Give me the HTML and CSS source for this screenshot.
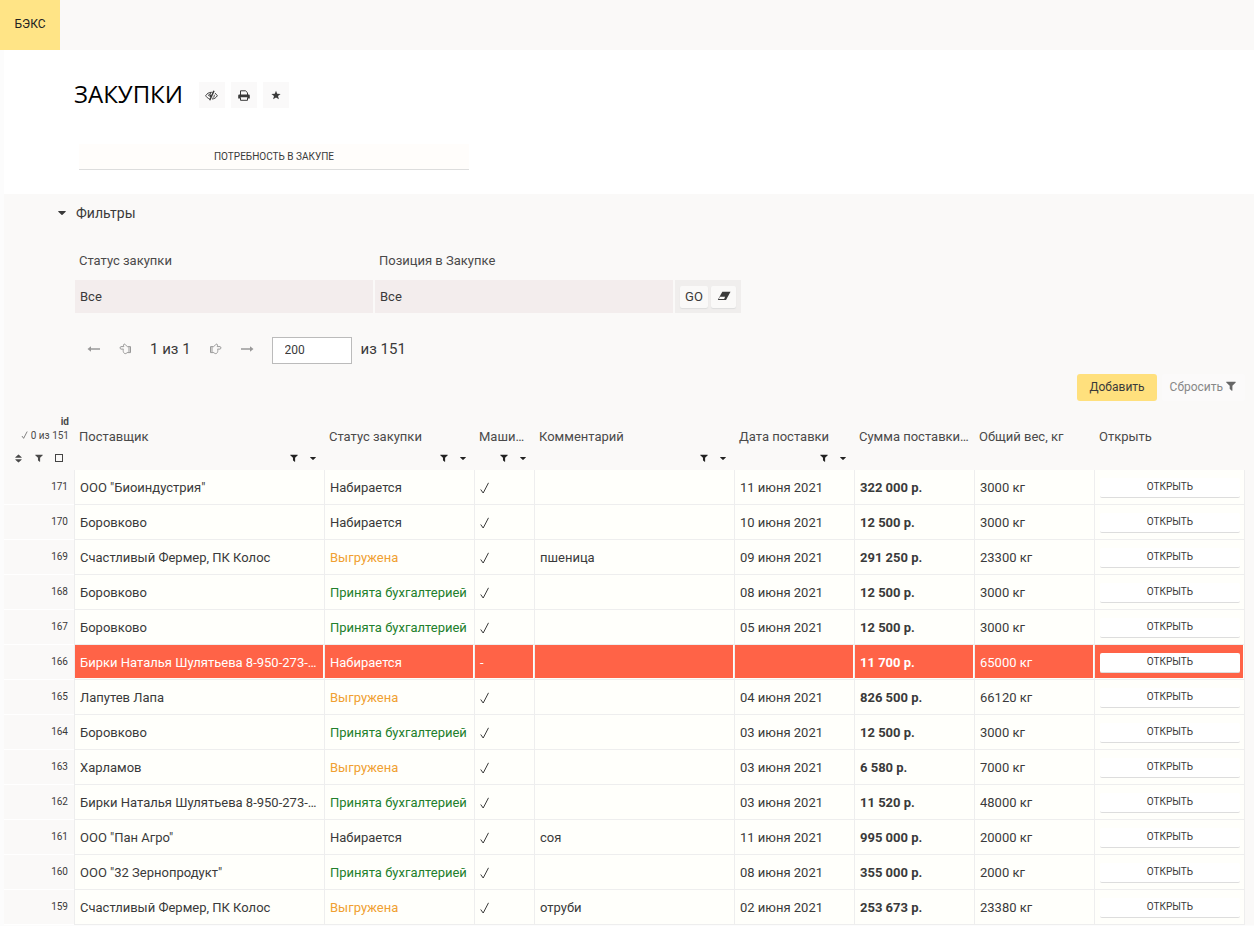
FILE: index.html
```html
<!DOCTYPE html>
<html lang="ru">
  <head>
    <meta charset="UTF-8" />
    <meta name="viewport" content="width=device-width, initial-scale=1.0" />
    <title>Закупки</title>
    <link rel="stylesheet" href="styles.css">
  </head>
  <body>
    <svg class="sprite" aria-hidden="true">
      <symbol id="filter" viewBox="0 0 10 10">
        <path d="M.6.8h8.8c.4 0 .5.4.3.7L6.4 4.8v4.6c0 .4-.4.5-.7.3L3.9 8.1a.6.6 0 0 1-.2-.4V4.8L.3 1.5C0 1.200.200.8.6.8z" />
      </symbol>
      <symbol id="caret" viewBox="0 0 8 4">
        <path d="M.7 0h6.600c.5 0 .7.5.4.8L4.500 3.700a.7.7 0 0 1-1 0L.3.8C0 .5.200 0 .7 0z" />
      </symbol>
      <symbol id="sort" viewBox="0 0 8 10">
        <path d="M.8 4.200h6.400c.5 0 .6-.4.4-.7L4.400.6a.6.6 0 0 0-.8 0L.4 3.500c-.3.3-.1.7.4.7zM.8 5.800h6.400c.5 0 .6.4.4.7L4.400 9.400a.6.6 0 0 1-.8 0L.4 6.500c-.3-.3-.1-.7.4-.7z" />
      </symbol>
      <symbol id="hand" viewBox="0 0 12 12">
        <path d="M1.500 3.600h2.800C3.800 2.600 3.800 1.300 4.800 1.100c1.100-.2 1.500 1.600 3 2.500h3.200v6H7.600C6.600 11 4.800 10.900 4.300 9.700c-.6-.6-.6-1.300-.3-1.700-.5-.6-.4-1.300 0-1.900H1.500C.3 6.100.3 3.600 1.500 3.600zM9.500 4v5" fill="none" stroke="currentColor" />
      </symbol>
      <symbol id="arrow" viewBox="0 0 14 8">
        <path d="M1 3.200h9V1.200L13.500 4 10 6.800V4.800H1z" />
      </symbol>
    </svg>

    <header class="topbar">
      <a class="brand" href="#">БЭКС</a>
    </header>

    <main>
      <section class="head">
        <div class="title-row">
          <h1>ЗАКУПКИ</h1>
          <div class="tools">
            <button type="button" class="tool" aria-label="Скрыть">
              <svg class="line" width="13" height="11" viewBox="0 0 13 11">
                <path d="M4.500 8.800C2.800 8.300 1.500 7.200.7 5.700 2 3.500 4 2.300 6.500 2.300h1M9.900 3.200c1 .6 1.800 1.400 2.400 2.500C11.300 7.600 9.300 8.900 7 9" />
                <path d="M3.700 6C3.700 4.300 4.800 3.600 6 3.500M9.300 4.800c.2 1.300-.4 2.400-1.600 3" />
                <path d="M9 .7 4.700 10.300M5.300 4.500v2.500" stroke-width="1.500" />
              </svg>
            </button>
            <button type="button" class="tool" aria-label="Печать">
              <svg width="12" height="11" viewBox="0 0 12 11">
                <path d="M2.500 5V.8h5L9.500 2.700V5M2.500 7.500v2.800h7V7.500" fill="none" stroke="currentColor" />
                <path d="M1.500 4.500h9c.8 0 1.300.5 1.300 1.300v2.800H9.500V7.200h-7v1.400H.2V5.800c0-.8.5-1.300 1.300-1.300z" />
              </svg>
            </button>
            <button type="button" class="tool" aria-label="В избранное">
              <svg width="10" height="10" viewBox="0 0 10 10">
                <path d="m5 .7 1.200 3.100 3.400.2L7 6.100l.9 3.200L5 7.500 2.100 9.300 3 6.100.4 4l3.400-.2z" />
              </svg>
            </button>
          </div>
        </div>
        <button type="button" class="need">ПОТРЕБНОСТЬ В ЗАКУПЕ</button>
      </section>

      <section class="content">
        <button type="button" class="toggle">
          <svg width="8" height="4"><use href="#caret" /></svg>Фильтры
        </button>

        <form class="filters">
          <div class="field">
            <label for="status">Статус закупки</label>
            <select id="status"><option>Все</option></select>
          </div>
          <div class="field">
            <label for="position">Позиция в Закупке</label>
            <select id="position"><option>Все</option></select>
          </div>
          <div class="go">
            <button type="button" class="submit">GO</button>
            <button type="button" class="erase" aria-label="Очистить">
              <svg width="14" height="10" viewBox="0 0 14 10">
                <path d="M5.300.8h8.200L9 9H.8z" />
                <path d="M2.900 5.800h5.200L7.100 7.900H1.900z" fill="#faf9f8" />
              </svg>
            </button>
          </div>
        </form>

        <div class="pager">
          <button type="button" class="nav" aria-label="Первая"><svg class="flip" width="14" height="8"><use href="#arrow" /></svg></button>
          <button type="button" class="nav" aria-label="Назад"><svg width="13" height="12"><use href="#hand" /></svg></button>
          <span>1 из 1</span>
          <button type="button" class="nav" aria-label="Вперед"><svg class="flip" width="13" height="12"><use href="#hand" /></svg></button>
          <button type="button" class="nav" aria-label="Последняя"><svg width="14" height="8"><use href="#arrow" /></svg></button>
          <input type="text" value="200" aria-label="Строк на странице" />
          <span>из 151</span>
        </div>

        <div class="actions">
          <button type="button" class="add">Добавить</button>
          <button type="button" class="reset">Сбросить <svg width="10" height="10"><use href="#filter" /></svg></button>
        </div>

        <table>
          <colgroup>
            <col class="c70" /><col class="c250" /><col class="c150" /><col class="c60" /><col class="c200" />
            <col class="c120" /><col class="c120" /><col class="c120" /><col />
          </colgroup>
          <thead>
            <tr>
              <th class="id-head">
                <b>id</b>
                <div><svg class="line" width="7" height="8" viewBox="0 0 9 12"><path d="M.7 7.500 3.200 11 8.500.8" /></svg> 0 из 151</div>
                <div class="id-icons">
                  <svg width="7" height="9"><use href="#sort" /></svg>
                  <svg width="8" height="8"><use href="#filter" /></svg>
                  <input type="checkbox" aria-label="Выбрать все" />
                </div>
              </th>
              <th><div class="name">Поставщик</div><div class="icons"><svg width="8" height="8"><use href="#filter" /></svg><svg width="6" height="3"><use href="#caret" /></svg></div></th>
              <th><div class="name">Статус закупки</div><div class="icons"><svg width="8" height="8"><use href="#filter" /></svg><svg width="6" height="3"><use href="#caret" /></svg></div></th>
              <th><div class="name">Маши…</div><div class="icons"><svg width="8" height="8"><use href="#filter" /></svg><svg width="6" height="3"><use href="#caret" /></svg></div></th>
              <th><div class="name">Комментарий</div><div class="icons"><svg width="8" height="8"><use href="#filter" /></svg><svg width="6" height="3"><use href="#caret" /></svg></div></th>
              <th><div class="name">Дата поставки</div><div class="icons"><svg width="8" height="8"><use href="#filter" /></svg><svg width="6" height="3"><use href="#caret" /></svg></div></th>
              <th><div class="name">Сумма поставки…</div><div class="icons"></div></th>
              <th><div class="name">Общий вес, кг</div><div class="icons"></div></th>
              <th><div class="name">Открыть</div><div class="icons"></div></th>
            </tr>
          </thead>
          <tbody id="rows"></tbody>
        </table>
      </section>
    </main>
    <script src="script.js"></script>
  </body>
</html>
```
FILE: styles.css
```css
* {
  box-sizing: border-box;
}
body {
  margin: 0;
  background: #fcfcfc;
  color: #3a3a3a;
  font-family: Roboto, "Liberation Sans", sans-serif;
  font-size: 13px;
  line-height: 16px;
}
button,
input,
select {
  font: inherit;
  color: inherit;
  border: 0;
  padding: 0;
  border-radius: 0;
}
button {
  background: none;
  cursor: pointer;
}
svg {
  fill: currentColor;
}
.sprite {
  display: none;
}
.line {
  fill: none;
  stroke: currentColor;
}
.topbar {
  display: flex;
  height: 50px;
  background: #faf9f8;
}
.brand {
  width: 60px;
  padding-top: 16px;
  background: #ffe486;
  color: #222;
  font-size: 12px;
  text-align: center;
  text-decoration: none;
}
main {
  margin-left: 4px;
}
.head {
  height: 144px;
  padding: 28px 70px 0;
  background: #fff;
}
.title-row {
  display: flex;
  align-items: center;
  gap: 16px;
  height: 34px;
}
h1 {
  margin: 0;
  padding-bottom: 2px;
  color: #000;
  font-family: "Open Sans", sans-serif;
  font-size: 24px;
  font-weight: 400;
  line-height: 34px;
}
.tools {
  display: flex;
  gap: 6px;
}
.tool {
  display: flex;
  align-items: center;
  justify-content: center;
  width: 26px;
  height: 26px;
  background: #faf9f9;
}
.need {
  display: block;
  width: 390px;
  height: 26px;
  margin: 32px 0 0 5px;
  background: #fffdfb;
  border-bottom: 1px solid #ddd;
  font-size: 10px;
}
.content {
  padding-right: 9px;
  background: #faf9f8;
}
.toggle {
  display: flex;
  align-items: center;
  gap: 10px;
  margin-left: 54px;
  padding-top: 11px;
  font-size: 14px;
}
.filters {
  display: flex;
  align-items: flex-end;
  gap: 2px;
  margin: 32px 0 0 71px;
}
.field {
  width: 298px;
}
.field label {
  display: block;
  padding: 0 4px 11px;
  color: #4a4a4a;
}
.field select {
  display: block;
  width: 100%;
  height: 33px;
  padding: 0 5px;
  background: #f3eded;
  appearance: none;
}
.go {
  display: flex;
  align-items: center;
  gap: 3px;
  height: 33px;
  padding: 0 5px;
  background: #f0eeed;
}
.go button {
  height: 22px;
  background: #faf9f8;
  border-radius: 2px;
  box-shadow: 0 1px 1px #ddd;
}
.go .submit {
  width: 28px;
}
.go .erase {
  width: 25px;
}
.pager {
  display: flex;
  align-items: center;
  gap: 18px;
  height: 27px;
  margin: 24px 0 0 83px;
  font-size: 15px;
}
.pager span,
.nav {
  padding-bottom: 3px;
}
.nav {
  display: flex;
  color: #999;
}
.flip {
  transform: scaleX(-1);
}
.pager input {
  width: 80px;
  height: 27px;
  margin-right: -9px;
  padding: 0 12px 2px;
  background: #fff;
  border: 1px solid #bbb;
  font-size: 12px;
}
.actions {
  display: flex;
  justify-content: flex-end;
  gap: 5px;
  margin-top: 10px;
}
.actions button {
  height: 27px;
  padding: 0 12px 1px;
  border-radius: 3px;
  font-size: 12px;
}
.actions .add {
  background: #ffe07d;
}
.actions .reset {
  padding: 0 9px 1px 8px;
  background: #fbfafa;
  color: #888;
}
.reset svg {
  color: #666;
}
table {
  width: 100%;
  margin-top: 14px;
  table-layout: fixed;
  border-spacing: 0;
}
.c60 {
  width: 60px;
}
.c70 {
  width: 70px;
}
.c120 {
  width: 120px;
}
.c150 {
  width: 150px;
}
.c200 {
  width: 200px;
}
.c250 {
  width: 250px;
}
th {
  height: 55px;
  padding: 0 5px;
  color: #4a4a4a;
  font-weight: 400;
  text-align: left;
  vertical-align: bottom;
}
.name {
  white-space: nowrap;
}
.icons {
  display: flex;
  align-items: center;
  justify-content: flex-end;
  gap: 12px;
  height: 25px;
  padding: 1px 3px 0 0;
  color: #222;
}
th.id-head {
  font-size: 10px;
  line-height: 14px;
  text-align: right;
}
.id-icons {
  display: flex;
  align-items: center;
  justify-content: space-between;
  height: 27px;
  padding: 3px 6px 0;
}
.id-icons input {
  width: 8px;
  height: 8px;
  margin: 0;
  border: 1px solid #444;
  appearance: none;
}
td {
  height: 35px;
  padding: 1px 4px 0 5px;
  background: #fffffb;
  border-bottom: 1px solid #eee;
  border-left: 1px solid #eee;
  white-space: nowrap;
}
td svg {
  display: block;
}
td.id {
  padding: 0 6px 0 0;
  background: #faf9f8;
  border-left: 0;
  border-bottom-color: #fff;
  font-size: 10px;
  text-align: right;
}
td:last-child {
  border-right: 1px solid #eee;
}
.shipped {
  color: #f0a030;
}
.accepted {
  color: #22802c;
}
.open {
  display: block;
  width: 100%;
  height: 20px;
  background: #fff;
  border-bottom: 1px solid #ddd;
  border-radius: 2px;
  font-size: 10px;
}
.alert td:not(.id) {
  background: #ff6347;
  box-shadow: inset -1px -1px 0 #fffffb;
  color: #fff;
}
td.sum {
  font-weight: 700;
}
.alert .open {
  color: #3a3a3a;
}
```
FILE: script.js
```js
const rows = [
  [171, 'ООО "Биоиндустрия"', "Набирается", "", "11 июня 2021", "322 000 р.", "3000 кг"],
  [170, "Боровково", "Набирается", "", "10 июня 2021", "12 500 р.", "3000 кг"],
  [169, "Счастливый Фермер, ПК Колос", "Выгружена", "пшеница", "09 июня 2021", "291 250 р.", "23300 кг"],
  [168, "Боровково", "Принята бухгалтерией", "", "08 июня 2021", "12 500 р.", "3000 кг"],
  [167, "Боровково", "Принята бухгалтерией", "", "05 июня 2021", "12 500 р.", "3000 кг"],
  [166, "Бирки Наталья Шулятьева 8-950-273-…", "Набирается", "", "", "11 700 р.", "65000 кг"],
  [165, "Лапутев Лапа", "Выгружена", "", "04 июня 2021", "826 500 р.", "66120 кг"],
  [164, "Боровково", "Принята бухгалтерией", "", "03 июня 2021", "12 500 р.", "3000 кг"],
  [163, "Харламов", "Выгружена", "", "03 июня 2021", "6 580 р.", "7000 кг"],
  [162, "Бирки Наталья Шулятьева 8-950-273-…", "Принята бухгалтерией", "", "03 июня 2021", "11 520 р.", "48000 кг"],
  [161, 'ООО "Пан Агро"', "Набирается", "соя", "11 июня 2021", "995 000 р.", "20000 кг"],
  [160, 'ООО "32 Зернопродукт"', "Принята бухгалтерией", "", "08 июня 2021", "355 000 р.", "2000 кг"],
  [159, "Счастливый Фермер, ПК Колос", "Выгружена", "отруби", "02 июня 2021", "253 673 р.", "23380 кг"],
];
const statusClass = { "Выгружена": "shipped", "Принята бухгалтерией": "accepted", "Набирается": "" };
const tick = '<svg class="line" width="9" height="12" viewBox="0 0 9 12"><path d="M.7 7.5 3.2 11 8.5.8" /></svg>';

document.getElementById("rows").innerHTML = rows
  .map(([id, supplier, status, comment, date, sum, weight]) => {
    // a purchase without a date has no truck yet
    return `<tr class="${date ? "" : "alert"}">
      <td class="id">${id}</td>
      <td>${supplier}</td>
      <td class="${statusClass[status]}">${status}</td>
      <td>${date ? tick : "-"}</td>
      <td>${comment}</td>
      <td>${date}</td>
      <td class="sum">${sum}</td>
      <td>${weight}</td>
      <td><button type="button" class="open">ОТКРЫТЬ</button></td>
    </tr>`;
  })
  .join("");
```
